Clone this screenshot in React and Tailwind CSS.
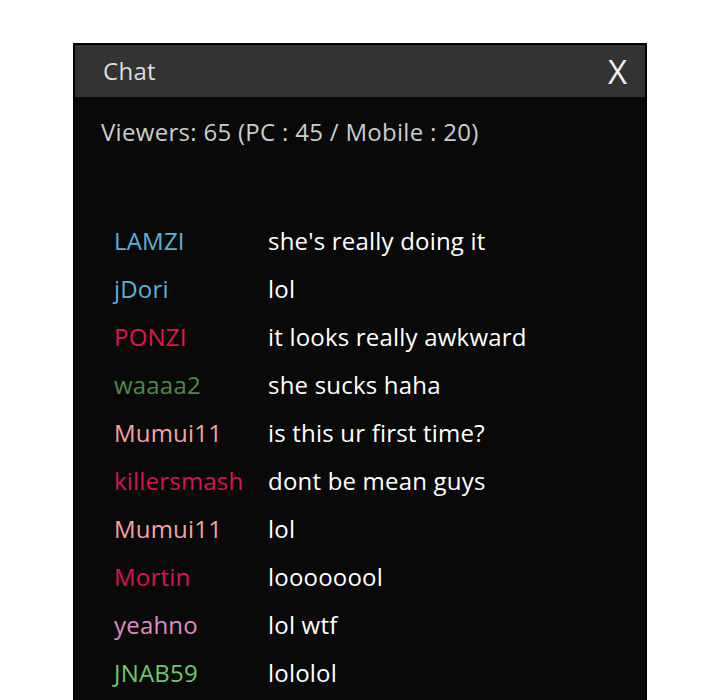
import React from 'react';

const messages = [
    { user: 'LAMZI', color: 'text-[#5ab0d8]', text: "she's really doing it" },
    { user: 'jDori', color: 'text-[#5ab0d8]', text: 'lol' },
    { user: 'PONZI', color: 'text-[#e3134f]', text: 'it looks really awkward' },
    { user: 'waaaa2', color: 'text-[#4c8a4c]', text: 'she sucks haha' },
    { user: 'Mumui11', color: 'text-[#f5a3a0]', text: 'is this ur first time?' },
    { user: 'killersmash', color: 'text-[#d8134f]', text: 'dont be mean guys' },
    { user: 'Mumui11', color: 'text-[#f5a3a0]', text: 'lol' },
    { user: 'Mortin', color: 'text-[#d8134f]', text: 'loooooool' },
    { user: 'yeahno', color: 'text-[#df8cc4]', text: 'lol wtf' },
    { user: 'JNAB59', color: 'text-[#6cc86c]', text: 'lololol' },
];

function App() {
    return (
        <div className="h-[700px] overflow-hidden bg-white pt-[43px] pl-[73px] font-['Open_Sans',sans-serif]">
            <div className="w-[574px] h-[700px] border-2 border-black bg-[#090909]">
                {/* Header */}
                <div className="h-[52px] bg-[#333333] flex items-center justify-between pl-[28px] pr-[18px]">
                    <span className="text-[24px] tracking-[0.3px] text-[#dddddd]">Chat</span>
                    <span className="text-[33px] leading-none text-[#eeeeee]">X</span>
                </div>

                <div className="pl-[26px] pt-[19px] text-[24px] leading-[32px] tracking-[0.3px] text-[#cccccc]">
                    Viewers: 65 (PC : 45 / Mobile : 20)
                </div>

                {/* Messages */}
                <div className="mt-[69px]">
                    {messages.map((m, i) => (
                        <div key={i} className="h-12 flex items-center text-[24px] tracking-[0.2px]">
                            <span className={`w-[193px] pl-[39px] ${m.color}`}>{m.user}</span>
                            <span className="text-white">{m.text}</span>
                        </div>
                    ))}
                </div>
            </div>
        </div>
    );
}

export default App;
